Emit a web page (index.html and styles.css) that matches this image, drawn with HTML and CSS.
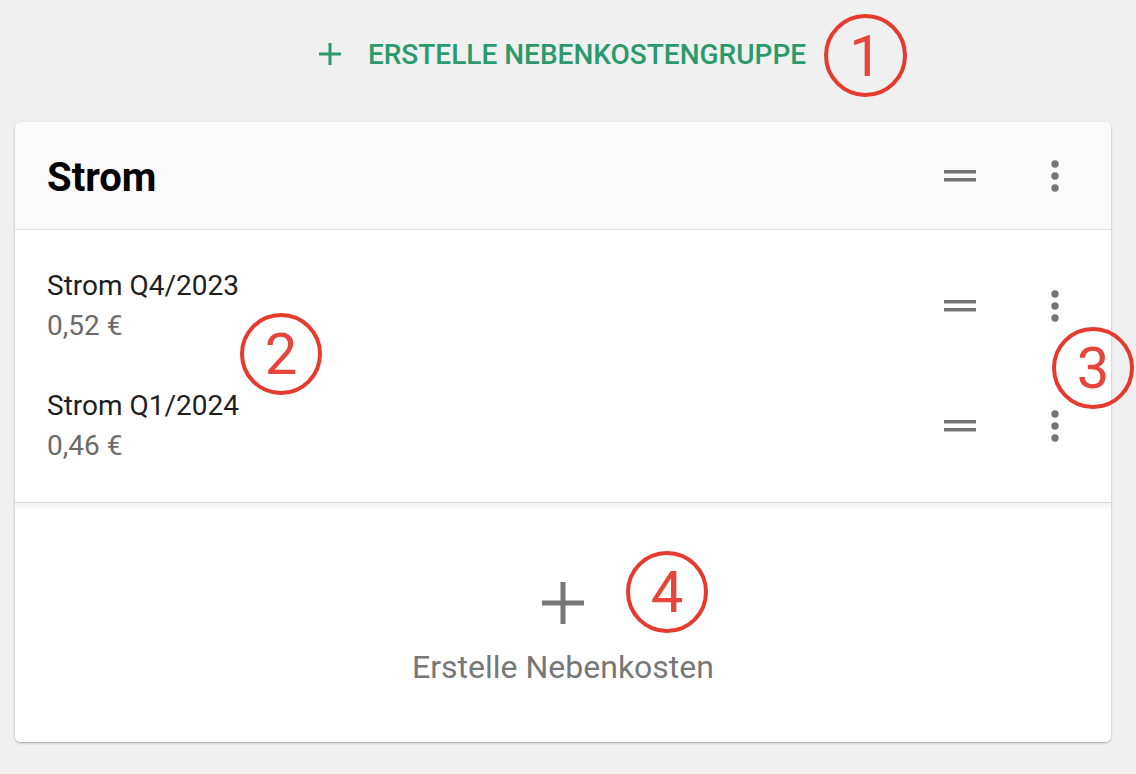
FILE: index.html
```html
<!DOCTYPE html>
<html lang="de">
<head>
<meta charset="utf-8">
<title>Nebenkosten</title>
<link rel="stylesheet" href="styles.css">
</head>
<body>
<div class="page">
  <div class="top">
    <button class="create-group">
      <svg class="plus-small" width="24" height="24" viewBox="0 0 24 24"><path d="M12 1v22M1 12h22" stroke="currentColor" stroke-width="3" fill="none"/></svg>
      <span>ERSTELLE NEBENKOSTENGRUPPE</span>
    </button>
  </div>

  <div class="card">
    <div class="card-head">
      <h2 class="title">Strom</h2>
      <div class="icon-box">
        <svg width="32" height="12" viewBox="0 0 32 12"><rect x="0" y="0" width="32" height="3.5" fill="#757575"/><rect x="0" y="8" width="32" height="3.5" fill="#757575"/></svg>
      </div>
      <div class="icon-box">
        <svg width="8" height="32" viewBox="0 0 8 32"><circle cx="4" cy="4" r="3.7" fill="#757575"/><circle cx="4" cy="16" r="3.7" fill="#757575"/><circle cx="4" cy="28" r="3.7" fill="#757575"/></svg>
      </div>
    </div>

    <div class="rows">
      <div class="row">
        <div class="row-text">
          <div class="name">Strom Q4/2023</div>
          <div class="price">0,52 €</div>
        </div>
        <div class="icon-box">
          <svg width="32" height="12" viewBox="0 0 32 12"><rect x="0" y="0" width="32" height="3.5" fill="#757575"/><rect x="0" y="8" width="32" height="3.5" fill="#757575"/></svg>
        </div>
        <div class="icon-box">
          <svg width="8" height="32" viewBox="0 0 8 32"><circle cx="4" cy="4" r="3.7" fill="#757575"/><circle cx="4" cy="16" r="3.7" fill="#757575"/><circle cx="4" cy="28" r="3.7" fill="#757575"/></svg>
        </div>
      </div>
      <div class="row">
        <div class="row-text">
          <div class="name">Strom Q1/2024</div>
          <div class="price">0,46 €</div>
        </div>
        <div class="icon-box">
          <svg width="32" height="12" viewBox="0 0 32 12"><rect x="0" y="0" width="32" height="3.5" fill="#757575"/><rect x="0" y="8" width="32" height="3.5" fill="#757575"/></svg>
        </div>
        <div class="icon-box">
          <svg width="8" height="32" viewBox="0 0 8 32"><circle cx="4" cy="4" r="3.7" fill="#757575"/><circle cx="4" cy="16" r="3.7" fill="#757575"/><circle cx="4" cy="28" r="3.7" fill="#757575"/></svg>
        </div>
      </div>
    </div>

    <button class="create-item">
      <svg width="42" height="42" viewBox="0 0 42 42"><path d="M21 0v42M0 21h42" stroke="#777" stroke-width="5" fill="none"/></svg>
      <span>Erstelle Nebenkosten</span>
    </button>
  </div>

  <div class="mark m1">1</div>
  <div class="mark m2">2</div>
  <div class="mark m3">3</div>
  <div class="mark m4">4</div>
</div>
</body>
</html>
```

FILE: styles.css
```css
* { box-sizing: border-box; }
html, body { margin: 0; padding: 0; }
body {
  background: #f0f0f0;
  font-family: Roboto, "Liberation Sans", sans-serif;
  width: 1136px;
  height: 774px;
  overflow: hidden;
}
.page {
  position: relative;
  padding: 0 25px 0 15px;
}
.top {
  height: 122px;
  display: flex;
  justify-content: center;
  align-items: flex-start;
  padding-top: 35px;
}
.create-group {
  display: flex;
  align-items: center;
  gap: 26px;
  background: none;
  border: 0;
  padding: 0;
  color: #2a9a6c;
  font-family: Roboto, "Liberation Sans", sans-serif;
  font-weight: 500;
  font-size: 28px;
  height: 38px;
  margin-left: -2px;
}
.plus-small { color: #2a9a6c; }

.card {
  width: 1096px;
  background: #fff;
  border-radius: 6px;
  box-shadow: 0 1px 3px rgba(0,0,0,0.24), 0 1px 1px rgba(0,0,0,0.1);
  overflow: hidden;
}
.card-head {
  height: 108px;
  background: #fafafa;
  border-bottom: 1px solid #e2e2e2;
  display: flex;
  align-items: center;
  padding: 0 32px;
}
.title {
  flex: 1;
  margin: 0;
  font-size: 40px;
  font-weight: 700;
  color: #000;
  padding-top: 4px;
}
.icon-box {
  width: 48px;
  display: flex;
  justify-content: center;
  align-items: center;
}
.icon-box + .icon-box { margin-left: 47px; }

.rows {
  padding: 16px 0 16px;
  border-bottom: 1px solid #d8d8d8;
}
.row {
  height: 120px;
  display: flex;
  align-items: center;
  padding: 0 32px;
}
.row-text { flex: 1; }
.name {
  font-size: 28px;
  color: #1f1f1f;
  line-height: 40px;
}
.price {
  font-size: 28px;
  color: #6b6b6b;
  line-height: 40px;
}

.create-item {
  width: 100%;
  height: 239px;
  display: flex;
  flex-direction: column;
  align-items: center;
  justify-content: center;
  gap: 24px;
  background: #fff;
  border: 0;
  padding: 22px 0 0 0;
  box-shadow: inset 0 7px 7px -5px rgba(0,0,0,0.09);
  font-family: Roboto, "Liberation Sans", sans-serif;
  font-size: 32px;
  line-height: 38px;
  color: #777;
}

.mark {
  position: absolute;
  width: 82px;
  height: 82px;
  border: 4px solid #e63a2c;
  border-radius: 50%;
  color: #e8453a;
  font-family: Roboto, "Liberation Sans", sans-serif;
  font-weight: 400;
  font-size: 58px;
  display: flex;
  align-items: center;
  justify-content: center;
  line-height: 1;
}
.m1 { left: 824px; top: 14px; width: 83px; height: 83px; }
.m2 { left: 240px; top: 313px; }
.m3 { left: 1052px; top: 327px; }
.m4 { left: 626px; top: 551px; }
```
